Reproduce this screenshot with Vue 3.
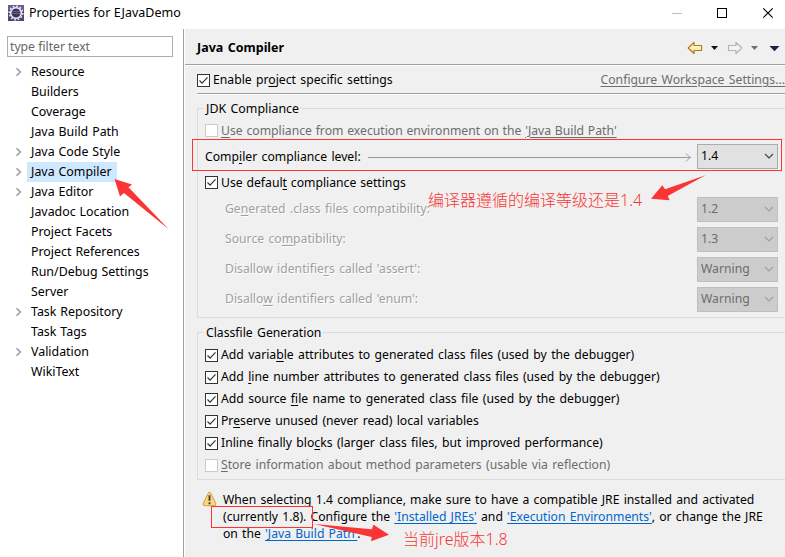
<script setup>
const tree = [
  { name: 'Resource', open: true },
  { name: 'Builders' },
  { name: 'Coverage' },
  { name: 'Java Build Path' },
  { name: 'Java Code Style', open: true },
  { name: 'Java Compiler', open: true, selected: true },
  { name: 'Java Editor', open: true },
  { name: 'Javadoc Location' },
  { name: 'Project Facets' },
  { name: 'Project References' },
  { name: 'Run/Debug Settings' },
  { name: 'Server' },
  { name: 'Task Repository', open: true },
  { name: 'Task Tags' },
  { name: 'Validation', open: true },
  { name: 'WikiText' },
]
// Labels are split around their mnemonic letter.
const levels = [
  { label: ['Ge', 'n', 'erated .class files compatibility:'], value: '1.2' },
  { label: ['Source co', 'm', 'patibility:'], value: '1.3' },
  { label: ['Disallow identifie', 'r', "s called 'assert':"], value: 'Warning' },
  { label: ['Disallo', 'w', " identifiers called 'enum':"], value: 'Warning' },
]
const options = [
  { label: ['Add varia', 'b', 'le attributes to generated class files (used by the debugger)'], on: true },
  { label: ['Add ', 'l', 'ine number attributes to generated class files (used by the debugger)'], on: true },
  { label: ['Add source ', 'f', 'ile name to generated class file (used by the debugger)'], on: true },
  { label: ['Pr', 'e', 'serve unused (never read) local variables'], on: true },
  { label: ['Inline finally blo', 'c', 'ks (larger class files, but improved performance)'], on: true },
  { label: ['', 'S', 'tore information about method parameters (usable via reflection)'], on: false },
]
</script>

<template>
  <div class="window">
    <header class="titlebar">
      <svg class="logo" width="16" height="16" viewBox="0 0 16 16">
        <rect width="16" height="16" fill="#51427c" />
        <rect width="16" height="5" fill="#6d5c96" />
        <circle cx="8" cy="8" r="6.7" fill="none" stroke="#e6e3ee" stroke-width="1.6" stroke-dasharray="1.75 1.75" />
        <circle cx="8" cy="8" r="5.3" fill="#3b315c" stroke="#f3f2f5" stroke-width="1.5" />
        <path d="M4 6.5h8M3.6 8.5h8.8" stroke="#77708f" stroke-width=".8" />
      </svg>
      <span class="title">Properties for EJavaDemo</span>
      <svg class="controls" width="104" height="12" viewBox="0 0 104 12">
        <path d="M1 6.5h10" stroke="#bdbdbd" />
        <rect x="46.5" y="1.5" width="9" height="9" fill="none" stroke="#000" />
        <path d="M92.3 1.3l9.4 9.4M101.7 1.3l-9.4 9.4" stroke="#000" stroke-width="1.2" />
      </svg>
    </header>

    <div class="body">
      <aside class="side">
        <div class="filter">type filter text</div>
        <ul class="tree">
          <li v-for="n in tree" :key="n.name">
            <svg class="twist" width="8" height="10" viewBox="0 0 8 10">
              <path v-if="n.open" d="M1.5 1.3l3.9 3.7-3.9 3.7" fill="none" stroke="#a6a6a6" stroke-width="1.7" />
            </svg>
            <span :class="['node', { selected: n.selected }]">{{ n.name }}</span>
          </li>
        </ul>
      </aside>

      <main class="page">
        <div class="heading">
          <h1>Java Compiler</h1>
          <svg class="nav" width="94" height="14" viewBox="0 0 94 14">
            <defs>
              <linearGradient id="gold" x1="0" y1="0" x2="0" y2="1">
                <stop offset="0" stop-color="#fffdf0" />
                <stop offset="1" stop-color="#fbe38c" />
              </linearGradient>
            </defs>
            <path d="M1.2 7L7 1.5V4.5H14.5V9.5H7V12.5Z" fill="url(#gold)" stroke="#b67a16" stroke-width="1.2" stroke-linejoin="round" />
            <path d="M24 5h7l-3.5 4z" fill="#111" />
            <path d="M54.8 7L49 1.5V4.5H41.5V9.5H49V12.5Z" fill="#f4f4f4" stroke="#b2b2b2" stroke-width="1.2" stroke-linejoin="round" />
            <path d="M64 5h7l-3.5 4z" fill="#6d6d73" />
            <path d="M82.500 5h10l-5 5.200z" fill="#2a1a4c" />
          </svg>
        </div>

        <div class="enable">
          <span class="check on"><svg width="11" height="11" viewBox="0 0 11 11"><path d="M1.500 5.500l2.600 2.700 5.400-5.900" /></svg></span>
          <span class="txt">Enable pr<u>o</u>ject specific settings</span>
          <span class="workspace">Configure Workspace Settings...</span>
        </div>

        <section class="group jdk">
          <h2 class="legend">JDK Compliance</h2>
          <div class="line off">
            <span class="check"></span>
            <span class="txt env"><u>U</u>se compliance from execution environment on the <span class="link">'Java Build Path'</span></span>
          </div>
          <div class="level main">
            <span class="txt">Comp<u>i</u>ler compliance level:</span>
            <span class="rule"><svg width="6" height="9" viewBox="0 0 6 9"><path d="M1 .5l4 4-4 4" fill="none" stroke="#999" /></svg></span>
            <span class="combo">1.4<svg width="10" height="6" viewBox="0 0 10 6"><path d="M1 1l4 4 4-4" /></svg></span>
          </div>
          <div class="line default">
            <span class="check on"><svg width="11" height="11" viewBox="0 0 11 11"><path d="M1.500 5.500l2.600 2.700 5.400-5.900" /></svg></span>
            <span class="txt">Use defaul<u>t</u> compliance settings</span>
          </div>
          <div v-for="(l, i) in levels" :key="i" class="level disabled">
            <span class="txt">{{ l.label[0] }}<u>{{ l.label[1] }}</u>{{ l.label[2] }}</span>
            <span class="combo">{{ l.value }}<svg width="10" height="6" viewBox="0 0 10 6"><path d="M1 1l4 4 4-4" /></svg></span>
          </div>
        </section>

        <section class="group classfile">
          <h2 class="legend">Classfile Generation</h2>
          <div v-for="(o, i) in options" :key="i" :class="['line', { off: !o.on }]">
            <span :class="['check', { on: o.on }]"><svg v-if="o.on" width="11" height="11" viewBox="0 0 11 11"><path d="M1.500 5.500l2.600 2.700 5.400-5.900" /></svg></span>
            <span class="txt">{{ o.label[0] }}<u>{{ o.label[1] }}</u>{{ o.label[2] }}</span>
          </div>
        </section>

        <div class="notice">
          <svg width="15" height="16" viewBox="0 0 15 16">
            <path d="M7.500 1.200Q8.300 1.200 8.800 2.300L13.700 12.300Q14.400 14.700 12.500 14.700H2.500Q.6 14.700 1.300 12.300L6.200 2.300Q6.700 1.200 7.500 1.200Z" fill="#f9d583" stroke="#d29a45" />
            <path d="M7.500 4.300v5.400M7.500 11.200v2" stroke="#49331c" stroke-width="1.800" />
          </svg>
          <p>
            <span>When selecting 1.4 compliance, make sure to have a compatible JRE installed and activated</span><br />
            <span>(currently 1.8). Configure the <a>'Installed JREs'</a> and <a>'Execution Environments'</a>, or change the JRE</span><br />
            <span>on the <a>'Java Build Path'</a>.</span>
          </p>
        </div>
      </main>
    </div>

    <div class="mark mark-level"></div>
    <div class="mark mark-version"></div>
    <svg class="arrows" width="785" height="557" viewBox="0 0 785 557">
      <path d="M114.500 179L132 184.500 128.500 187.300 169 229.500 124 193 120 196.500Z" />
      <path d="M651 198.700L662.300 185.300 665 189.300 705.500 175.200 667.700 196 669.700 200.200Z" />
      <path d="M314 524L371.700 529.300 373.500 524.700 389 534.700 371 541.200 371.700 537Z" />
    </svg>
    <div class="note note-level">编译器遵循的编译等级还是<span>1.4</span></div>
    <div class="note note-version">当前<span>jre</span>版本<span>1.8</span></div>
  </div>
</template>

<style>
body { margin: 0; overflow: hidden; }
</style>

<style scoped>
* { box-sizing: border-box; }
.window {
  position: relative;
  width: 785px;
  height: 557px;
  overflow: hidden;
  display: flex;
  flex-direction: column;
  background: #fff;
  color: #000;
  font-family: "Noto Sans", "Open Sans", sans-serif;
  font-size: 12.200px;
  word-spacing: 1.200px;
  line-height: 20px;
  white-space: nowrap;
}
.titlebar { height: 29px; flex: none; display: flex; align-items: center; padding: 0 10px 3px 8px; }
.title { margin-left: 5px; flex: 1; font-size: 12.500px; word-spacing: .300px; }
.body { flex: 1; display: flex; min-height: 0; }
.side { width: 185px; flex: none; padding: 7px 0 0 7px; border-right: 1px solid #fff; box-shadow: inset -1px 0 #a0a0a0; }
.filter { width: 166px; height: 21px; border: 1px solid #acacb4; padding-left: 2px; line-height: 19px; color: #666; word-spacing: 0; }
.tree { margin: 5px 0 0; padding: 0; list-style: none; }
.tree li { height: 20px; display: flex; align-items: center; padding-left: 8px; font-size: 12.400px; word-spacing: .700px; }
.twist { margin-right: 4px; }
.node { height: 20px; line-height: 20px; padding: 0 4px; }
.selected { background: #cde8ff; padding-right: 5px; }
.page { flex: 1; min-width: 0; background: #f0f0f0; overflow: hidden; }
.heading { height: 37px; display: flex; align-items: center; justify-content: space-between; padding: 1px 4px 0 12px; border-bottom: 1px solid #fff; box-shadow: inset 0 -1px #a0a0a0; }
h1 { margin: 0; padding-top: 1px; font-size: 12.500px; line-height: 20px; }
.enable { height: 29px; margin-left: 12px; display: flex; align-items: center; border-bottom: 1px solid #fff; box-shadow: inset 0 -1px #a0a0a0; }
.workspace { margin-left: auto; color: #6d6d6d; text-decoration: underline; text-underline-offset: 2px; }
.check { width: 13px; height: 13px; flex: none; border: 1px solid #ccc; background: #fff; margin-right: 3px; }
.check.on { border-color: #333; }
.check svg { display: block; fill: none; stroke: #333; stroke-width: 1.200; }
u { text-underline-offset: 2px; }
.group { width: 620px; margin-left: 12px; border: 1px solid #dcdcdc; padding-left: 7px; }
.legend { width: max-content; height: 20px; margin: -10px 0 -1px -1px; padding: 0 2px; background: #f0f0f0; font-size: 12.400px; font-weight: normal; line-height: 20px; }
.line { height: 22px; display: flex; align-items: center; }
.off .txt { color: #6d6d6d; }
.off .env { word-spacing: .600px; }
.jdk { height: 210px; margin-top: 13px; }
.jdk .line.off { height: 25px; }
.link { text-decoration: underline; text-underline-offset: 2px; }
.level { width: 573px; display: flex; align-items: center; justify-content: space-between; }
.main { height: 26px; }
.main .txt { padding-top: 2px; }
.main .rule { position: relative; top: 1px; }
.default { height: 25px; padding-top: 2px; }
.default .txt { word-spacing: .700px; }
.disabled { height: 30px; padding-left: 20px; }
.disabled .txt { color: #a0a0a0; text-shadow: 1px 1px #fff; }
.rule { flex: 1; height: 1px; margin: 0 6px 0 7px; background: #999; display: flex; align-items: center; justify-content: flex-end; }
.rule svg { flex: none; }
.combo { width: 81px; height: 25px; flex: none; border: 1px solid #acacac; background: #e1e1e1; display: flex; align-items: center; justify-content: space-between; padding: 0 3px; }
.combo svg { fill: none; stroke: #444; stroke-width: 1.200; }
.disabled .combo { background: #ccc; border-color: #bfbfbf; color: #6d6d6d; }
.disabled .combo svg { stroke: #a0a0a0; }
.classfile { height: 148px; margin-top: 14px; }
.classfile .legend { margin-bottom: 1px; font-size: 12.200px; }
.notice { display: flex; align-items: flex-start; padding: 11px 0 0 17px; word-spacing: 1px; }
.notice p { margin: 0 0 0 6px; line-height: 17px; }
.notice a { color: #06c; text-decoration: underline; text-underline-offset: 2px; }
.mark { position: absolute; border: 1px solid #f33; }
.mark-level { left: 192px; top: 139px; width: 590px; height: 32px; }
.mark-version { left: 211px; top: 506px; width: 102px; height: 22px; }
.arrows { position: absolute; left: 0; top: 0; fill: #f93535; }
.note { position: absolute; color: #f93535; font-family: "Noto Sans CJK SC", sans-serif; font-weight: 300; font-size: 16px; line-height: 20px; }
.note span { font-family: "Noto Sans", sans-serif; font-size: 16px; }
.note-level { left: 428px; top: 189px; }
.note-version { left: 403px; top: 528px; }
</style>
